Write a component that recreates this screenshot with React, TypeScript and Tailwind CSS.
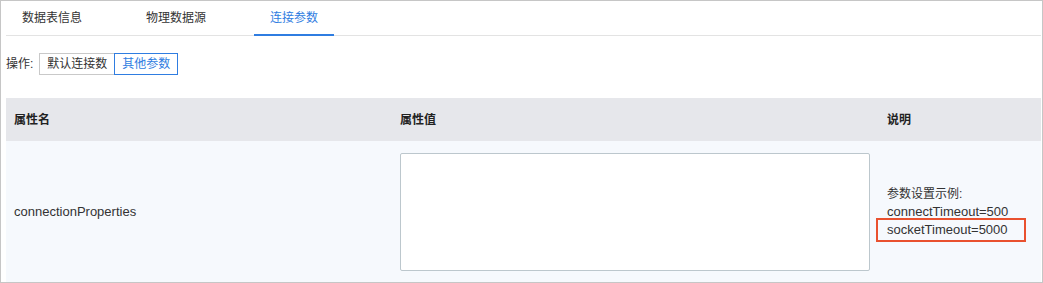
import { useState } from 'react';

const tabs = ['数据表信息', '物理数据源', '连接参数'];

export default function App() {
  const [active, setActive] = useState(2);
  const [mode, setMode] = useState<'default' | 'other'>('other');
  const [value, setValue] = useState('');

  return (
    <div className="h-[283px] w-[1043px] overflow-hidden border border-[#c6c6c6] bg-white font-['Liberation_Sans','Noto_Sans_CJK_SC',sans-serif] text-[12px] text-[#333]">
      <div className="ml-[5px] mr-px flex h-[35px] gap-8 border-b border-[#e3e3e3]">
        {tabs.map((tab, i) => (
          <button
            key={tab}
            onClick={() => setActive(i)}
            className={
              i === active
                ? 'h-[35px] border-b-2 border-[#2f7de1] px-4 pt-px text-[12px] text-[#2f7de1]'
                : 'h-[35px] border-b-2 border-transparent px-4 pt-px text-[12px] text-[#333]'
            }
          >
            {tab}
          </button>
        ))}
      </div>

      <div className="ml-[5px] mt-[17px] flex items-center">
        <span className="mr-[6px] text-[12px] text-[#333]">操作:</span>
        <button
          onClick={() => setMode('default')}
          className={
            mode === 'default'
              ? 'relative z-10 h-[22px] border border-[#2f7de1] px-[7px] text-[12px] text-[#2f7de1]'
              : 'h-[22px] border border-[#c9c9c9] px-[7px] text-[12px] text-[#333]'
          }
        >
          默认连接数
        </button>
        <button
          onClick={() => setMode('other')}
          className={
            mode === 'other'
              ? 'relative z-10 -ml-px h-[22px] border border-[#2f7de1] px-[7px] text-[12px] text-[#2f7de1]'
              : '-ml-px h-[22px] border border-[#c9c9c9] px-[7px] text-[12px] text-[#333]'
          }
        >
          其他参数
        </button>
      </div>

      <table className="ml-[5px] mt-[23px] w-[1035px] table-fixed border-collapse">
        <colgroup>
          <col className="w-[386px]" />
          <col className="w-[487px]" />
          <col />
        </colgroup>
        <thead>
          <tr className="h-[43px] bg-[#e6e7eb] text-left">
            <th className="px-2 text-[12px] font-bold text-[#222]">属性名</th>
            <th className="px-2 text-[12px] font-bold text-[#222]">属性值</th>
            <th className="px-2 text-[12px] font-bold text-[#222]">说明</th>
          </tr>
        </thead>
        <tbody>
          <tr className="bg-[#f6f9fd]">
            <td className="px-2 align-middle text-[13px] text-[#333]">connectionProperties</td>
            <td className="py-3 pl-2 pr-[9px]">
              <textarea
                value={value}
                onChange={(e) => setValue(e.target.value)}
                className="block h-[118px] w-full resize-none rounded-[2px] border border-[#bcc7cd] bg-white p-2 text-[12px] outline-none focus:border-[#2f7de1]"
              />
            </td>
            <td className="px-2 align-middle text-[13px] leading-[18px] text-[#333]">
              <div className="text-[12px]">参数设置示例:</div>
              <div>connectTimeout=500</div>
              <div className="relative">
                socketTimeout=5000
                <span className="pointer-events-none absolute -top-[3px] -left-[11px] h-[24px] w-[150px] border-2 border-[#e9512f]" />
              </div>
            </td>
          </tr>
        </tbody>
      </table>
    </div>
  );
}
